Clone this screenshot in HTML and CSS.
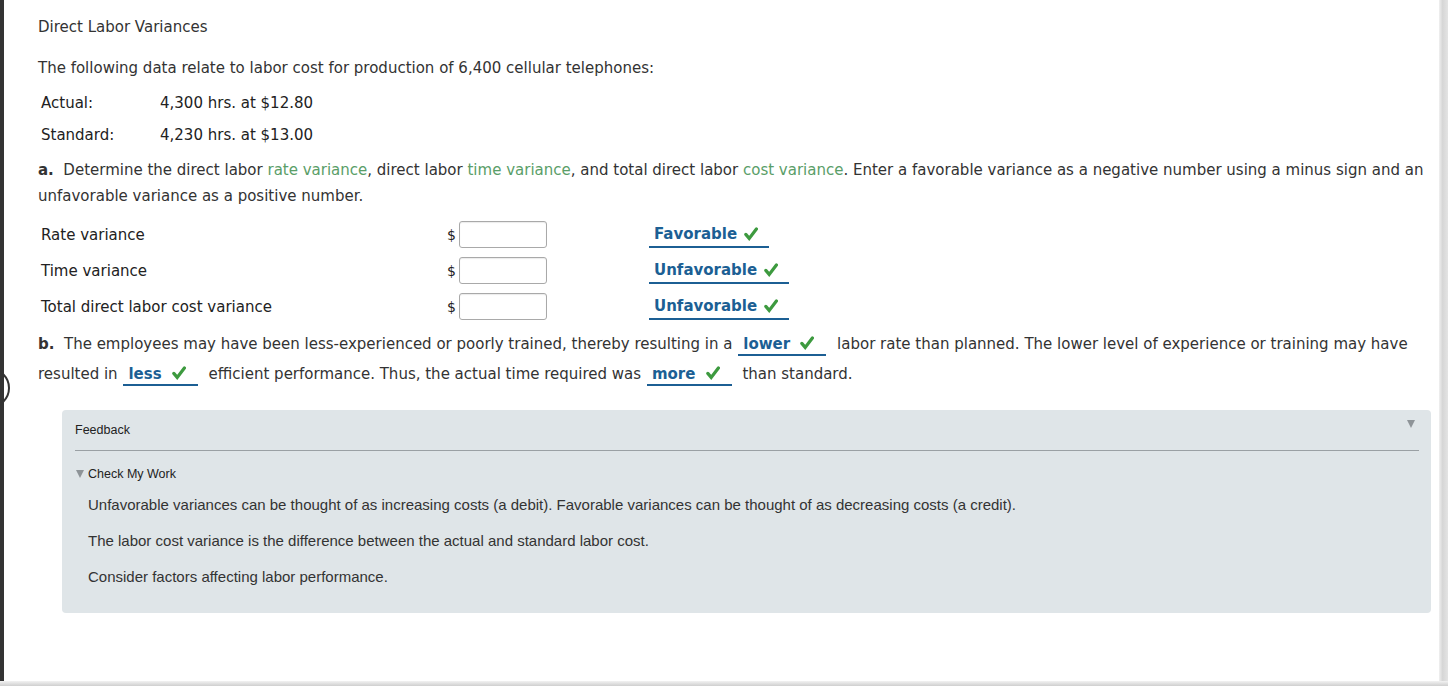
FILE: index.html
```html
<!DOCTYPE html>
<html>
<head>
<meta charset="utf-8">
<link rel="stylesheet" href="styles.css">
</head>
<body>
<div class="frame">
  <div class="edge-arc"></div>
  <main class="content">
    <h1 class="title">Direct Labor Variances</h1>
    <p class="intro">The following data relate to labor cost for production of 6,400 cellular telephones:</p>
    <table class="data">
      <tr><td class="data-label">Actual:</td><td>4,300 hrs. at $12.80</td></tr>
      <tr><td class="data-label">Standard:</td><td>4,230 hrs. at $13.00</td></tr>
    </table>
    <p class="question"><b>a.</b>&nbsp; Determine the direct labor <span class="term">rate variance</span>, direct labor <span class="term">time variance</span>, and total direct labor <span class="term">cost variance</span>. Enter a favorable variance as a negative number using a minus sign and an unfavorable variance as a positive number.</p>
    <div class="answers">
      <div class="answer-row">
        <span class="row-label">Rate variance</span>
        <span class="dollar">$</span><span class="input"></span>
        <span class="choice choice-wide">Favorable<svg class="check" viewBox="0 0 14 14"><path d="M1.8 7.4 L5.2 11.4 L12.4 2"/></svg></span>
      </div>
      <div class="answer-row">
        <span class="row-label">Time variance</span>
        <span class="dollar">$</span><span class="input"></span>
        <span class="choice">Unfavorable<svg class="check" viewBox="0 0 14 14"><path d="M1.8 7.4 L5.2 11.4 L12.4 2"/></svg></span>
      </div>
      <div class="answer-row">
        <span class="row-label">Total direct labor cost variance</span>
        <span class="dollar">$</span><span class="input"></span>
        <span class="choice">Unfavorable<svg class="check" viewBox="0 0 14 14"><path d="M1.8 7.4 L5.2 11.4 L12.4 2"/></svg></span>
      </div>
    </div>
    <p class="part-b"><b>b.</b>&nbsp; The employees may have been less-experienced or poorly trained, thereby resulting in a <span class="inline-choice">lower <svg class="check" viewBox="0 0 14 14"><path d="M1.8 7.4 L5.2 11.4 L12.4 2"/></svg></span> labor rate than planned. The lower level of experience or training may have resulted in <span class="inline-choice">less <svg class="check" viewBox="0 0 14 14"><path d="M1.8 7.4 L5.2 11.4 L12.4 2"/></svg></span> efficient performance. Thus, the actual time required was <span class="inline-choice">more <svg class="check" viewBox="0 0 14 14"><path d="M1.8 7.4 L5.2 11.4 L12.4 2"/></svg></span> than standard.</p>
    <section class="feedback">
      <div class="feedback-head">
        <span>Feedback</span>
        <span class="head-arrow"></span>
      </div>
      <div class="check-work"><span class="small-arrow"></span>Check My Work</div>
      <p class="fb-text">Unfavorable variances can be thought of as increasing costs (a debit). Favorable variances can be thought of as decreasing costs (a credit).</p>
      <p class="fb-text">The labor cost variance is the difference between the actual and standard labor cost.</p>
      <p class="fb-text">Consider factors affecting labor performance.</p>
    </section>
  </main>
  <div class="scroll-edge"></div>
</div>
<div class="bottom-edge"></div>
</body>
</html>
```

FILE: styles.css
```css
html, body {
  margin: 0;
  padding: 0;
  background: #ffffff;
}

body {
  width: 1448px;
  height: 686px;
  overflow: hidden;
  font-family: "DejaVu Sans", Verdana, sans-serif;
  color: #333333;
}

.frame {
  position: relative;
  display: flex;
  height: 681px;
  border-left: 4px solid #333333;
}

.edge-arc {
  position: absolute;
  left: -34px;
  top: 368px;
  width: 36px;
  height: 36px;
  border: 2px solid #333333;
  border-radius: 50%;
}

.content {
  flex: 1;
  padding: 17px 8px 0 34px;
}

.scroll-edge {
  width: 9px;
  background: linear-gradient(to right, #f0f0f0, #d6d6d6 40%, #e4e4e4);
}

.bottom-edge {
  height: 5px;
  background: linear-gradient(to bottom, #f2f2f2, #cfcfcf);
}

.title {
  margin: 0;
  font-size: 15px;
  font-weight: normal;
  line-height: 20px;
  color: #333333;
}

.intro {
  margin: 21px 6px 0 0;
  font-size: 15px;
  line-height: 20px;
}

.data {
  margin-top: 9px;
  border-collapse: collapse;
  font-size: 15px;
  color: #222222;
}

.data td {
  height: 32px;
  padding: 0 0 0 3px;
}

.data-label {
  width: 116px;
}

.question {
  margin: 6px 6px 0 0;
  font-size: 15px;
  line-height: 26px;
}

.question b,
.part-b b {
  color: #333333;
}

.term {
  color: #5a9e68;
}

.answers {
  margin-top: 8px;
}

.answer-row {
  display: flex;
  align-items: center;
  height: 36px;
  font-size: 15px;
}

.row-label {
  width: 406px;
  padding-left: 3px;
  color: #222222;
}

.dollar {
  width: 12px;
  font-size: 14px;
  color: #222222;
}

.input {
  width: 86px;
  height: 25px;
  margin-top: -2px;
  border: 1px solid #a9a9a9;
  border-radius: 3px;
  box-shadow: inset 0 1px 1px rgba(0, 0, 0, 0.08);
}

.choice {
  display: inline-flex;
  align-items: center;
  margin-left: 102px;
  padding: 0 11px 2px 5px;
  border-bottom: 2px solid #1c5f94;
  font-weight: bold;
  color: #1c5f94;
  line-height: 20px;
  margin-top: 2px;
}

.choice .check {
  margin-left: 7px;
}

.choice-wide {
  min-width: 120px;
  box-sizing: border-box;
}

.check {
  width: 14px;
  height: 14px;
  margin-left: 5px;
}

.check path {
  fill: none;
  stroke: #3d9a3f;
  stroke-width: 3.2;
  stroke-linecap: round;
  stroke-linejoin: miter;
}

.part-b {
  margin: 4px 6px 0 0;
  font-size: 15px;
  line-height: 30px;
}

.inline-choice {
  display: inline-block;
  margin: 0 6px 0 1px;
  padding: 0 12px 0 5px;
  line-height: 20px;
  border-bottom: 2px solid #1c5f94;
  font-weight: bold;
  color: #1c5f94;
}

.inline-choice .check {
  vertical-align: -1px;
}

.feedback {
  margin: 21px 0 0 24px;
  height: 203px;
  box-sizing: border-box;
  padding: 11px 12px 0 13px;
  background: #dfe5e8;
  border-radius: 4px;
  font-family: "Liberation Sans", Arial, sans-serif;
  color: #222222;
}

.feedback-head {
  display: flex;
  justify-content: space-between;
  line-height: 18px;
  padding-bottom: 11px;
  border-bottom: 1px solid #9aa0a4;
  font-size: 12.5px;
}

.head-arrow {
  width: 0;
  height: 0;
  margin: -1px 4px 0 0;
  border-left: 4px solid transparent;
  border-right: 4px solid transparent;
  border-top: 8px solid #8e9498;
}

.check-work {
  display: flex;
  align-items: center;
  margin-top: 14px;
  line-height: 18px;
  font-size: 12.5px;
}

.small-arrow {
  width: 0;
  height: 0;
  margin: 0 4px 0 1px;
  border-left: 4px solid transparent;
  border-right: 4px solid transparent;
  border-top: 8px solid #8e9498;
}

.fb-text {
  margin: 13px 0 0 13px;
  line-height: 18px;
  font-size: 15px;
  color: #333333;
}

.fb-text + .fb-text {
  margin-top: 18px;
}
```
